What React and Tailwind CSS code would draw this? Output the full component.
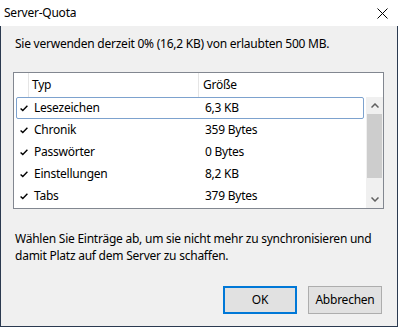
export default function App() {
  const rows = [
    { typ: 'Lesezeichen', size: '6,3 KB' },
    { typ: 'Chronik', size: '359 Bytes' },
    { typ: 'Passwörter', size: '0 Bytes' },
    { typ: 'Einstellungen', size: '8,2 KB' },
    { typ: 'Tabs', size: '379 Bytes' },
  ];

  return (
    <div className="w-[398px] h-[327px] flex flex-col text-[12px] tracking-[-0.02em] text-black" style={{ fontFamily: '"Noto Sans", "Open Sans", sans-serif' }}>
      {/* TITLE BAR */}
      <div className="h-[26px] bg-white flex items-center justify-between pl-[4px] pr-[10px] shrink-0">
        <span className="leading-none">Server-Quota</span>
        <svg className="w-[11px] h-[11px]" viewBox="0 0 11 11" fill="none" stroke="#000" strokeWidth="1">
          <line x1="0.5" y1="0.5" x2="10.5" y2="10.5" />
          <line x1="10.5" y1="0.5" x2="0.5" y2="10.5" />
        </svg>
      </div>

      {/* BODY */}
      <div className="flex-1 bg-[#f0f0f0] border-x border-b border-[#2b3a50] flex flex-col pt-[10px]">
        <p className="pl-[14px] leading-[16px]">Sie verwenden derzeit 0% (16,2 KB) von erlaubten 500 MB.</p>

        {/* LISTE */}
        <div className="ml-[12px] mt-[20px] w-[371px] h-[137px] border border-[#828790] bg-white flex flex-col">
          <div className="h-[24px] flex items-stretch shrink-0">
            <div className="w-[15px] border-r border-[#e5e5e5]" />
            <div className="w-[170px] border-r border-[#e5e5e5] pl-[3px] flex items-center">Typ</div>
            <div className="pl-[4px] flex items-center">Größe</div>
          </div>
          <div className="flex flex-1">
            <div className="w-[352px] flex flex-col">
              {rows.map((row, i) => (
                <div
                  key={row.typ}
                  className={`h-[22px] mx-[2px] flex items-center rounded-[2px] border ${i === 0 ? 'border-[#7da2ce]' : 'border-transparent'}`}
                >
                  <div className="w-[15px] pl-[3px] flex items-center">
                    <svg className="w-[8px] h-[7px]" viewBox="0 0 8 7" fill="none" stroke="#000" strokeWidth="1.4">
                      <polyline points="0.6 3.4 2.8 5.6 7.4 0.8" />
                    </svg>
                  </div>
                  <div className="w-[170px] pl-[2px]">{row.typ}</div>
                  <div className="pl-[3px]">{row.size}</div>
                </div>
              ))}
            </div>
            {/* Scrollbar */}
            <div className="w-[17px] bg-[#f0f0f0] flex flex-col">
              <div className="h-[17px] flex items-center justify-center">
                <svg className="w-[8px] h-[5px]" viewBox="0 0 8 5" fill="none" stroke="#606060" strokeWidth="1.5">
                  <polyline points="0.5 4.5 4 1 7.5 4.5" />
                </svg>
              </div>
              <div className="h-[64px] bg-[#cdcdcd] mx-px" />
              <div className="flex-1" />
              <div className="h-[17px] flex items-center justify-center">
                <svg className="w-[8px] h-[5px]" viewBox="0 0 8 5" fill="none" stroke="#606060" strokeWidth="1.5">
                  <polyline points="0.5 0.5 4 4 7.5 0.5" />
                </svg>
              </div>
            </div>
          </div>
        </div>

        <p className="pl-[14px] pr-[20px] mt-[21px] leading-[17px]">
          Wählen Sie Einträge ab, um sie nicht mehr zu synchronisieren und damit Platz auf dem Server zu schaffen.
        </p>

        {/* BUTTONS */}
        <div className="mt-auto mb-[12px] mr-[15px] flex justify-end gap-[11px]">
          <button className="w-[74px] h-[28px] bg-[#e1e1e1] border-2 border-[#0078d7]">OK</button>
          <button className="w-[74px] h-[28px] bg-[#e1e1e1] border border-[#adadad]">Abbrechen</button>
        </div>
      </div>
    </div>
  );
}
